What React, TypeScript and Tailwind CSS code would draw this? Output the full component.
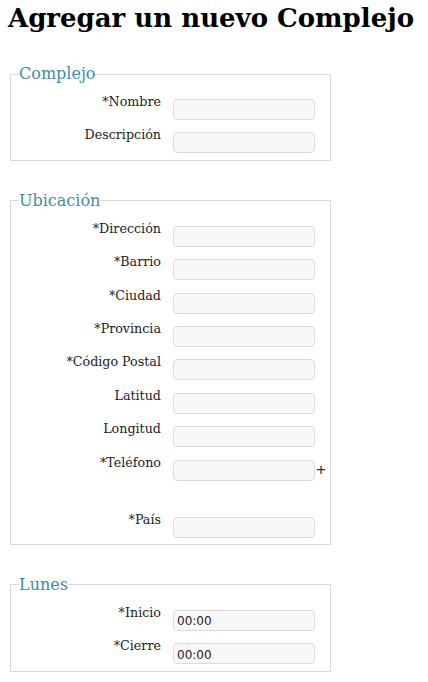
import type { ReactNode } from "react";

type Field = {
  label: string;
  value?: string;
  extra?: boolean;
};

const complejo: Field[] = [{ label: "*Nombre" }, { label: "Descripción" }];

const ubicacion: Field[] = [
  { label: "*Dirección" },
  { label: "*Barrio" },
  { label: "*Ciudad" },
  { label: "*Provincia" },
  { label: "*Código Postal" },
  { label: "Latitud" },
  { label: "Longitud" },
  { label: "*Teléfono", extra: true },
  { label: "*País" },
];

const lunes: Field[] = [
  { label: "*Inicio", value: "00:00" },
  { label: "*Cierre", value: "00:00" },
];

function Row({ field }: { field: Field }) {
  return (
    <div className={field.extra ? "flex h-[57px] items-start" : "flex h-[33.4px] items-start last:h-[31.4px]"}>
      <label className="w-[142px] shrink-0 text-right text-[12.7px] leading-[14px] text-[#222] [font-family:'DejaVu_Serif',serif]">
        {field.label}
      </label>
      <div className="relative ml-[12px] mt-[4px]">
        <input
          type="text"
          defaultValue={field.value ?? ""}
          className="block h-[21px] w-[142px] rounded-[4px] border border-[#dcdcdc] bg-[#f8f8f8] px-[3px] pt-[2px] text-[12px] text-[#222] outline-none [font-family:'DejaVu_Sans',sans-serif]"
        />
        {field.extra && (
          <span className="absolute left-full top-[1px] ml-[1px] text-[17px] leading-[17px] text-[#333] [font-family:'Liberation_Sans',sans-serif]">
            +
          </span>
        )}
      </div>
    </div>
  );
}

function Section({ title, children }: { title: string; children: ReactNode }) {
  return (
    <fieldset className="ml-[10px] w-[321px] min-w-0 border border-[#dadada] px-[8px] pt-[11px] pb-0">
      <legend className="px-0 text-[16px] leading-[20px] text-[#3d8cab] [font-family:'DejaVu_Serif',serif]">
        {title}
      </legend>
      {children}
    </fieldset>
  );
}

export default function App() {
  return (
    <div className="min-h-screen bg-white pb-4">
      <h1 className="ml-[8px] pt-[3px] text-[26px] font-bold leading-[30px] text-black [font-family:'DejaVu_Serif',serif]">
        Agregar un nuevo Complejo
      </h1>

      <div className="mt-[31px] flex flex-col gap-[30px]">
        <Section title="Complejo">
          {complejo.map((f) => (
            <Row key={f.label} field={f} />
          ))}
        </Section>

        <Section title="Ubicación">
          {ubicacion.map((f) => (
            <Row key={f.label} field={f} />
          ))}
        </Section>

        <Section title="Lunes">
          {lunes.map((f) => (
            <Row key={f.label} field={f} />
          ))}
        </Section>
      </div>
    </div>
  );
}
